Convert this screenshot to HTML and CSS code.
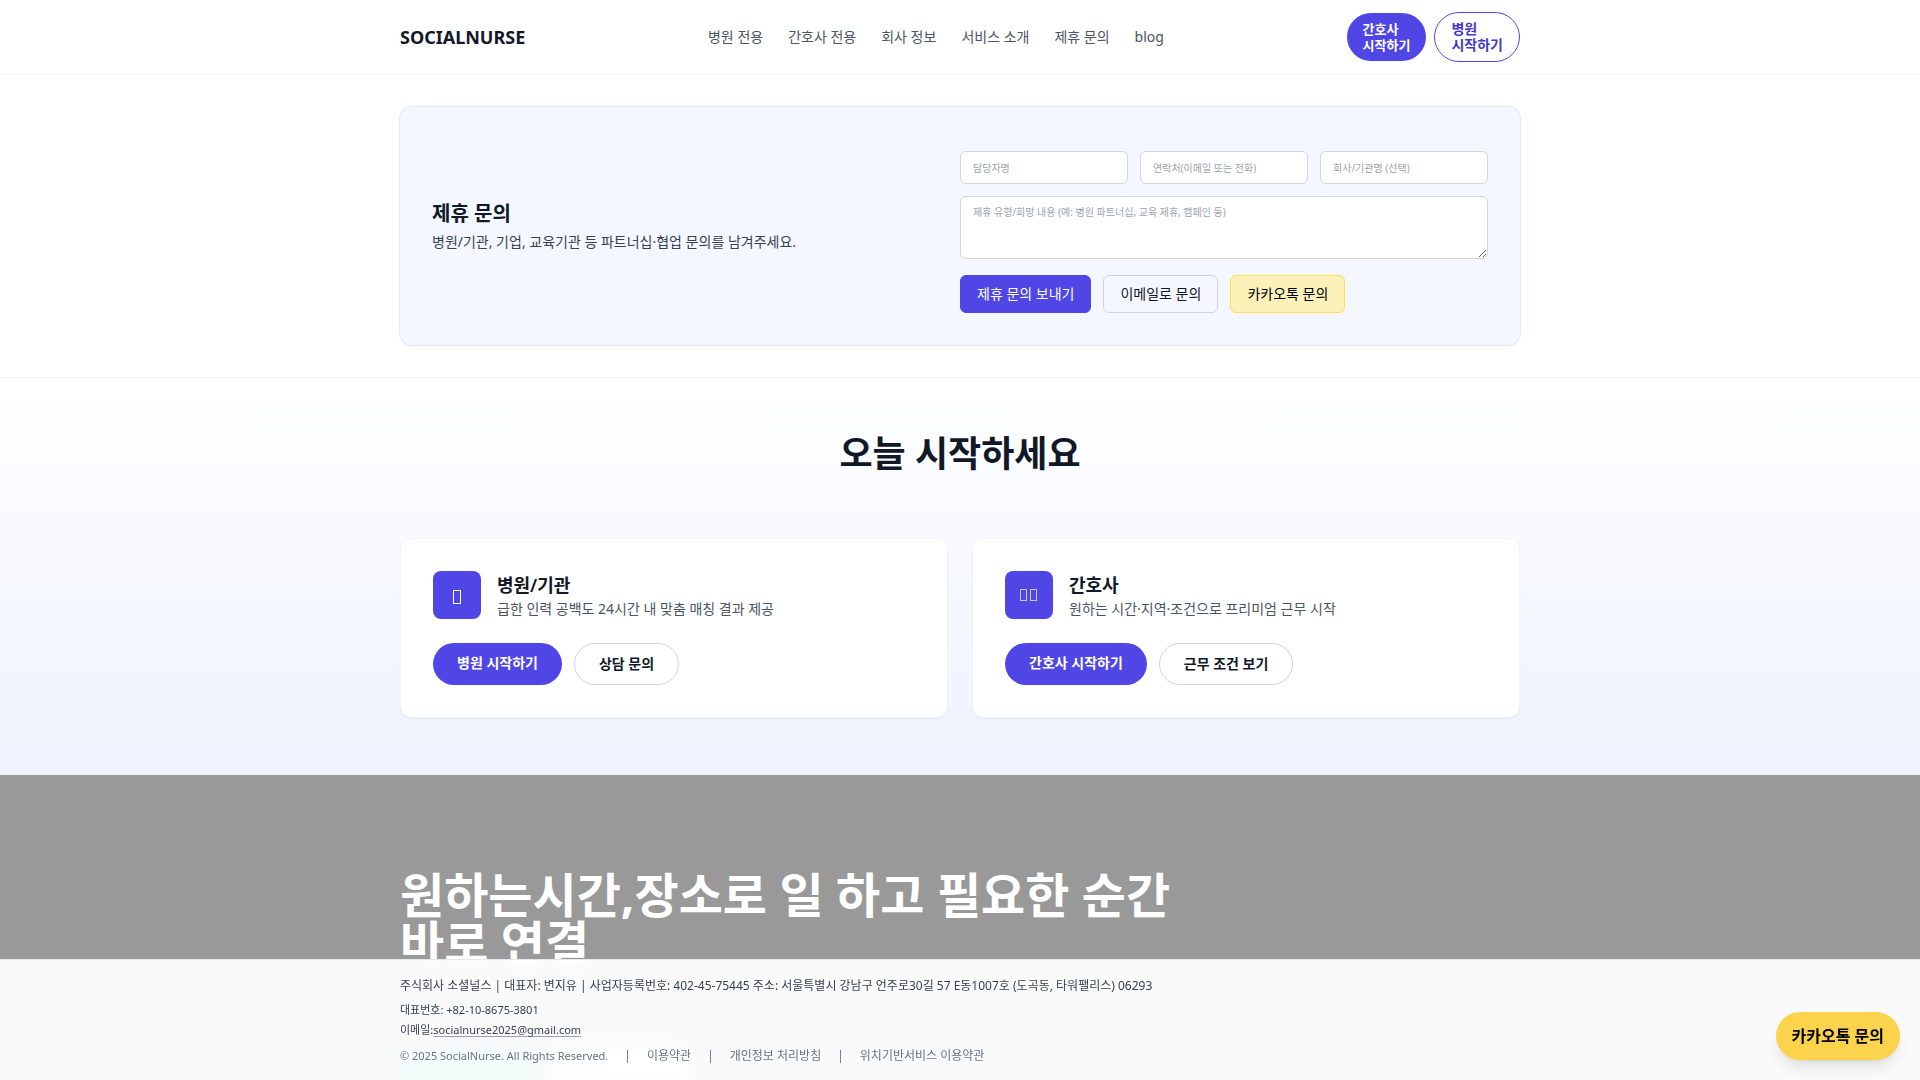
FILE: index.html
```html
<!DOCTYPE html>
<html lang="ko">
<head>
<meta charset="utf-8">
<meta name="viewport" content="width=device-width, initial-scale=1">
<title>SOCIALNURSE</title>
<link rel="stylesheet" href="styles.css">
</head>
<body>
<header class="site-header">
  <div class="container header-row">
    <a class="brand" href="#">SOCIALNURSE</a>
    <nav class="main-nav">
      <a href="#">병원 전용</a>
      <a href="#">간호사 전용</a>
      <a href="#">회사 정보</a>
      <a href="#">서비스 소개</a>
      <a href="#contact">제휴 문의</a>
      <a href="#">blog</a>
    </nav>
    <div class="header-actions">
      <a class="start start-solid" href="#">간호사<br>시작하기</a>
      <a class="start start-outline" href="#">병원<br>시작하기</a>
    </div>
  </div>
</header>

<main>
  <section class="contact" id="contact">
    <div class="container">
      <div class="panel">
        <div class="panel-intro">
          <h2>제휴 문의</h2>
          <p>병원/기관, 기업, 교육기관 등 파트너십·협업 문의를 남겨주세요.</p>
        </div>
        <form class="contact-form">
          <div class="fields">
            <input type="text" aria-label="담당자명" placeholder="담당자명">
            <input type="text" aria-label="연락처" placeholder="연락처(이메일 또는 전화)">
            <input type="text" aria-label="회사/기관명" placeholder="회사/기관명 (선택)">
          </div>
          <textarea rows="3" aria-label="문의 내용" placeholder="제휴 유형/희망 내용 (예: 병원 파트너십, 교육 제휴, 캠페인 등)"></textarea>
          <div class="form-actions">
            <button class="btn btn-primary" type="button">제휴 문의 보내기</button>
            <button class="btn btn-plain" type="button">이메일로 문의</button>
            <button class="btn btn-kakao" type="button">카카오톡 문의</button>
          </div>
        </form>
      </div>
    </div>
  </section>

  <section class="begin">
    <div class="container">
      <h2 class="begin-title">오늘 시작하세요</h2>
      <div class="cards">
        <article class="card">
          <div class="card-head">
            <div class="card-icon">
              <svg width="48" height="48" viewBox="0 0 48 48" fill="none" stroke="#fff" aria-hidden="true"><rect x="20.5" y="19.5" width="7" height="13"/></svg>
            </div>
            <div>
              <h3>병원/기관</h3>
              <p>급한 인력 공백도 24시간 내 맞춤 매칭 결과 제공</p>
            </div>
          </div>
          <div class="card-actions">
            <a class="pill pill-solid" href="#">병원 시작하기</a>
            <a class="pill pill-outline" href="#">상담 문의</a>
          </div>
        </article>
        <article class="card">
          <div class="card-head">
            <div class="card-icon">
              <svg width="48" height="48" viewBox="0 0 48 48" fill="none" stroke="#c9c6f8" aria-hidden="true"><rect x="15.5" y="18.5" width="6" height="11"/><rect x="25.5" y="18.5" width="6" height="11"/></svg>
            </div>
            <div>
              <h3>간호사</h3>
              <p>원하는 시간·지역·조건으로 프리미엄 근무 시작</p>
            </div>
          </div>
          <div class="card-actions">
            <a class="pill pill-solid" href="#">간호사 시작하기</a>
            <a class="pill pill-outline" href="#">근무 조건 보기</a>
          </div>
        </article>
      </div>
    </div>
  </section>

  <section class="hero">
    <div class="container">
      <h1>원하는시간,장소로 일 하고 필요한 순간 바로 연결</h1>
      <div class="hero-shapes" aria-hidden="true">
        <span class="shape shape-teal"></span>
        <span class="shape shape-white"></span>
      </div>
    </div>
  </section>
</main>

<footer class="site-footer">
  <div class="container">
    <p class="company">주식회사 소셜널스 | 대표자: 변지유 | 사업자등록번호: 402-45-75445 주소: 서울특별시 강남구 언주로30길 57 E동1007호 (도곡동, 타워팰리스) 06293</p>
    <div class="reach">
      <p>대표번호: +82-10-8675-3801</p>
      <p>이메일:<a href="mailto:socialnurse2025@gmail.com">socialnurse2025@gmail.com</a></p>
    </div>
    <div class="legal">
      <small>© 2025 SocialNurse. All Rights Reserved.</small>
      <span>|</span>
      <a href="#">이용약관</a>
      <span>|</span>
      <a href="#">개인정보 처리방침</a>
      <span>|</span>
      <a href="#">위치기반서비스 이용약관</a>
    </div>
  </div>
</footer>

<a class="kakao-float" href="#">카카오톡 문의</a>
</body>
</html>
```

FILE: styles.css
```css
*,
*::before,
*::after {
  box-sizing: border-box;
}

body,
h1,
h2,
h3,
p {
  margin: 0;
}

body {
  display: flex;
  flex-direction: column;
  min-height: 100vh;
  background: #fff;
  color: #111827;
  font-family: "Noto Sans", "Noto Sans CJK KR", sans-serif;
  font-size: 14px;
  line-height: 20px;
}

a {
  color: inherit;
  text-decoration: none;
}

main {
  display: flex;
  flex-direction: column;
  flex: 1;
}

.container {
  width: 100%;
  max-width: 1152px;
  margin: 0 auto;
  padding: 0 16px;
}

/* Header */
.site-header {
  border-bottom: 1px solid #f3f4f6;
  background: #fff;
}

.header-row {
  display: flex;
  align-items: center;
  justify-content: space-between;
  padding-top: 12px;
  padding-bottom: 12px;
}

.brand {
  font-size: 18px;
  font-weight: 700;
  line-height: 28px;
}

.main-nav {
  display: flex;
  gap: 25px;
  color: #4b5563;
}

.header-actions {
  display: flex;
  align-items: center;
  gap: 8px;
}

.start {
  padding: 8px 16px;
  border-radius: 25px;
  font-weight: 600;
  line-height: 16px;
}

.start-solid {
  background: #4f46e5;
  color: #fff;
  font-size: 13px;
}

.start-outline {
  border: 1px solid #4f46e5;
  color: #4338ca;
}

/* Partnership form */
.contact {
  padding: 32px 0;
}

.panel {
  display: grid;
  grid-template-columns: 1fr 1fr;
  align-items: center;
  padding: 32px;
  border-radius: 12px;
  background: #f4f7ff;
  box-shadow: 0 0 0 1px #e0e7ff;
}

.panel-intro h2 {
  margin-bottom: 4px;
  font-size: 20px;
  font-weight: 700;
  line-height: 28px;
}

.panel-intro p {
  color: #374151;
}

.contact-form {
  display: flex;
  flex-direction: column;
  gap: 12px;
  padding-top: 12px;
}

.fields {
  display: grid;
  grid-template-columns: repeat(3, 1fr);
  gap: 12px;
}

.contact-form input,
.contact-form textarea {
  display: block;
  width: 100%;
  min-width: 0;
  margin: 0;
  padding: 8px 12px;
  border: 1px solid #d1d5db;
  border-radius: 6px;
  background: #fff;
  color: #111827;
  font: inherit;
  font-size: 10px;
  line-height: 15px;
}

.contact-form input {
  height: 33px;
}

.contact-form textarea {
  resize: vertical;
}

.contact-form ::placeholder {
  color: #9ca3af;
  opacity: 1;
}

.form-actions {
  display: flex;
  flex-wrap: wrap;
  gap: 12px;
  padding-top: 4px;
}

.btn {
  padding: 8px 16px;
  border: 1px solid #d1d5db;
  border-radius: 6px;
  font: inherit;
  line-height: 20px;
  cursor: pointer;
}

.btn-primary {
  border-color: #4f46e5;
  background: #4f46e5;
  color: #fff;
}

.btn-plain {
  background: transparent;
  color: #111827;
}

.btn-kakao {
  border-color: #fde047;
  background: #fbf1b9;
  color: #000;
}

/* Start today */
.begin {
  padding: 56px 0;
  border-top: 1px solid #f3f4f6;
  border-bottom: 1px solid #f3f4f6;
  background: linear-gradient(#fff, #eef2ff);
}

.begin-title {
  margin-bottom: 64px;
  font-size: 36px;
  font-weight: 700;
  line-height: 40px;
  text-align: center;
}

.cards {
  display: grid;
  grid-template-columns: 1fr 1fr;
  gap: 24px;
}

.card {
  display: flex;
  flex-direction: column;
  gap: 24px;
  padding: 32px;
  border: 1px solid #f3f4f6;
  border-radius: 12px;
  background: #fff;
  box-shadow: 0 1px 2px rgba(0, 0, 0, 0.05);
}

.card-head {
  display: flex;
  align-items: center;
  gap: 16px;
}

.card-icon {
  flex: none;
  width: 48px;
  height: 48px;
  border-radius: 8px;
  background: #4f46e5;
}

.card-icon svg {
  display: block;
}

.card h3 {
  font-size: 18px;
  font-weight: 600;
  line-height: 28px;
}

.card p {
  color: #4b5563;
}

.card-actions {
  display: flex;
  flex-wrap: wrap;
  gap: 12px;
}

.pill {
  padding: 10px 24px;
  border-radius: 21px;
  font-weight: 600;
}

.pill-solid {
  background: #4f46e5;
  color: #fff;
}

.pill-outline {
  border: 1px solid #d1d5db;
}

/* Hero */
.hero {
  flex: 1;
  padding-top: 96px;
  background: #999;
}

.hero h1 {
  max-width: 784px;
  color: #fff;
  font-size: 48px;
  font-weight: 700;
  line-height: 48px;
}

.hero-shapes {
  display: flex;
  gap: 16px;
  padding-top: 80px;
}

.shape {
  width: 136px;
  height: 32px;
  border-radius: 16px 16px 0 0;
}

.shape-teal {
  background: #2dd4bf;
}

.shape-white {
  background: #fff;
}

/* Pinned footer */
.site-footer {
  position: fixed;
  right: 0;
  bottom: 0;
  left: 0;
  padding: 16px 0;
  border-top: 1px solid #e5e7eb;
  background: rgba(255, 255, 255, 0.95);
  backdrop-filter: blur(8px);
  color: #374151;
  font-size: 11px;
  line-height: 16px;
}

.company {
  font-size: 12px;
  line-height: 20px;
}

.reach {
  display: grid;
  gap: 4px;
  padding: 6px 0 10px;
}

.reach a {
  text-decoration: underline;
  text-decoration-color: #9ca3af;
  text-decoration-thickness: 1px;
  text-underline-offset: 2px;
}

.legal {
  display: flex;
  flex-wrap: wrap;
  align-items: center;
  gap: 0 16px;
  color: #6b7280;
  font-size: 12px;
}

.legal small {
  font-size: 11px;
}

.kakao-float {
  position: fixed;
  right: 20px;
  bottom: 20px;
  padding: 12px 16px;
  border-radius: 24px;
  background: #fcd34d;
  box-shadow: 0 10px 15px -3px rgba(0, 0, 0, 0.1), 0 4px 6px -4px rgba(0, 0, 0, 0.1);
  color: #000;
  font-size: 16px;
  font-weight: 600;
  line-height: 24px;
}
```
